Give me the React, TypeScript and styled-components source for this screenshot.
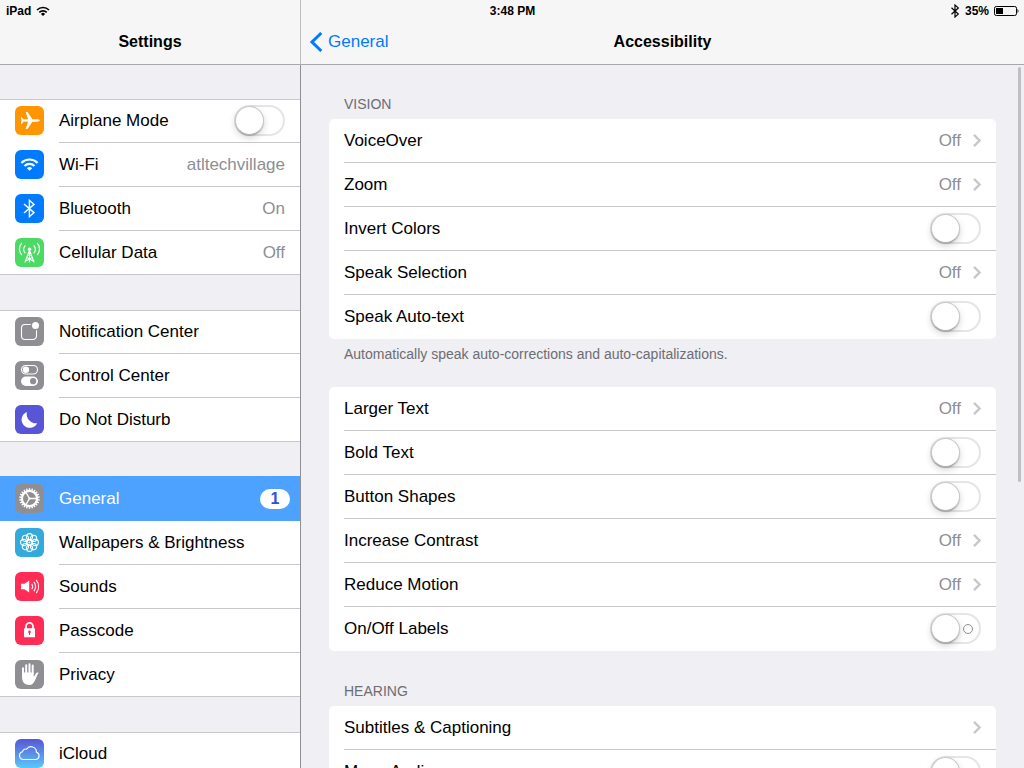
import React from 'react';
import styled, { createGlobalStyle, css } from 'styled-components';

const GlobalStyle = createGlobalStyle`
  *, *::before, *::after { box-sizing: border-box; }
  body {
    margin: 0;
    background: #efeff4;
    color: #000;
    font-family: "Liberation Sans", Arial, sans-serif;
    font-size: 17px;
    line-height: 20px;
  }
  h1, h2, p, ul { margin: 0; padding: 0; }
  ul { list-style: none; }
`;

const Screen = styled.div`
  position: relative;
  display: grid;
  grid-template-columns: 300px minmax(0, 1fr);
  height: 100vh;
  overflow: hidden;
`;

const StatusBar = styled.div`
  position: absolute;
  inset: 0 0 auto 0;
  z-index: 2;
  display: grid;
  grid-template-columns: 1fr auto 1fr;
  align-items: center;
  height: 20px;
  padding: 2px 5px 0 6px;
  font-size: 12px;
  font-weight: bold;
  line-height: 18px;
`;

const StatusGroup = styled.div<{ $end?: boolean }>`
  display: flex;
  align-items: center;
  gap: 5px;
  justify-content: ${(p) => (p.$end ? 'flex-end' : 'flex-start')};
  svg { display: block; }
`;

const Pane = styled.section`
  position: relative;
  display: flex;
  flex-direction: column;
  min-width: 0;
  min-height: 0;
`;

const NavBar = styled.header<{ $divided?: boolean }>`
  flex: none;
  display: grid;
  grid-template-columns: 1fr auto 1fr;
  align-items: center;
  height: 65px;
  padding: 20px 8px 0;
  background: #f6f6f6;
  border-bottom: 1px solid #a7a7ac;
  ${(p) => p.$divided && css`border-left: 1px solid #bfbfc3;`}
`;

const Title = styled.h1`
  grid-column: 2;
  font-size: 16px;
  font-weight: bold;
`;

const BackLink = styled.a`
  display: flex;
  align-items: center;
  gap: 5px;
  color: #007aff;
  text-decoration: none;
`;

const Scroller = styled.div<{ $detail?: boolean }>`
  flex: 1;
  min-height: 0;
  overflow-y: auto;
  scrollbar-width: none;
  ${(p) =>
    p.$detail
      ? css`
          padding: 30px 28px;
          border-left: 1px solid #8e8e93;
        `
      : css`padding: 34px 0;`}
`;

const ScrollThumb = styled.div`
  position: absolute;
  top: 67px;
  right: 3px;
  width: 3px;
  height: 54vh;
  border-radius: 2px;
  background: #bfbfc4;
`;

const SideGroup = styled.ul`
  background: #fff;
  box-shadow: inset 0 1px #c8c7cc, inset 0 -1px #c8c7cc;
  & + & { margin-top: 35px; }
`;

const Line = styled.div`
  flex: 1;
  display: flex;
  align-items: center;
  min-width: 0;
  padding-right: 15px;
  border-bottom: 1px solid #c8c7cc;
`;

const rowStyle = css`
  display: flex;
  height: 44px;
  padding-left: 15px;
  color: inherit;
  text-decoration: none;
`;

const RowLink = styled.a<{ $selected?: boolean }>`
  ${rowStyle}
  ${(p) =>
    p.$selected &&
    css`
      background: #4da1ff;
      box-shadow: 0 -1px #4da1ff;
      color: #fff;
      ${Line} { border-color: transparent; padding-right: 10px; }
    `}
`;

const RowLabel = styled.label`
  ${rowStyle}
`;

const Item = styled.li`
  &:last-child ${Line} { border-color: transparent; }
`;

const IconTile = styled.span<{ $fill: string }>`
  flex: none;
  width: 29px;
  height: 29px;
  margin: 7px 15px 0 0;
  border-radius: 6px;
  background: ${(p) => p.$fill};
  svg { display: block; }
`;

const Name = styled.span`
  flex: 1;
  white-space: nowrap;
`;

const Value = styled.span`
  color: #8e8e93;
`;

const Badge = styled.span`
  width: 30px;
  height: 20px;
  border-radius: 10px;
  background: #fff;
  color: #2a52e0;
  font-size: 16px;
  font-weight: bold;
  text-align: center;
`;

const Switch = styled.input.attrs({ type: 'checkbox', role: 'switch' })<{ $marked?: boolean }>`
  appearance: none;
  position: relative;
  flex: none;
  width: 51px;
  height: 31px;
  margin: 0;
  border: 2px solid #e5e5e5;
  border-radius: 16px;
  background: #fff;
  &::before {
    content: '';
    position: absolute;
    top: -1px;
    left: -1px;
    width: 29px;
    height: 29px;
    border: 1px solid #c9c9c9;
    border-bottom-color: #b0b0b0;
    border-radius: 50%;
    background: #fff;
    box-shadow: 0 3px 7px rgba(0, 0, 0, 0.16), 0 1px 1px rgba(0, 0, 0, 0.2);
  }
  &:checked { background: #4cd964; border-color: #4cd964; }
  &:checked::before { left: 19px; }
  ${(p) =>
    p.$marked &&
    css`
      &::after {
        content: '';
        position: absolute;
        top: 9px;
        right: 6px;
        width: 10px;
        height: 10px;
        border: 1px solid #8e8e8e;
        border-radius: 50%;
      }
    `}
`;

const SectionTitle = styled.h2`
  padding: 0 15px 6px;
  color: #6d6d72;
  font-size: 14px;
  font-weight: normal;
  line-height: 18px;
`;

const Card = styled.ul`
  border-radius: 5px;
  background: #fff;
`;

const Footnote = styled.p`
  padding: 6px 15px 0;
  color: #6d6d72;
  font-size: 14px;
  line-height: 18px;
`;

const Section = styled.section`
  & + & { margin-top: 24px; }
  & + &:has(h2) { margin-top: 31px; }
`;

const ChevronSvg = styled.svg`
  display: block;
  margin-left: 12px;
`;

const Chevron = () => (
  <ChevronSvg width="8" height="13" viewBox="0 0 8 13" fill="none" stroke="#c7c7cc" strokeWidth="2.4" aria-hidden="true">
    <path d="M1 .9 6.6 6.5 1 12.1" />
  </ChevronSvg>
);

const Glyph = ({ children }: { children: React.ReactNode }) => (
  <svg width="29" height="29" viewBox="0 0 29 29" fill="none" stroke="#fff" strokeLinecap="round" strokeLinejoin="round" aria-hidden="true">
    {children}
  </svg>
);

const petals = Array.from({ length: 8 }, (_, i) => (i * Math.PI) / 4);
const teeth = Array.from({ length: 22 }, (_, i) => (i * 360) / 22);

const glyphs = {
  airplane: (
    <path
      fill="#fff"
      stroke="none"
      d="M24.8 14.5c0 .7-1.3 1.2-2.8 1.2h-4.6l-4.9 7.3h-1.9l2.5-7.3-4.6-.3-1.8 2.6H6l.4-3.500L6 11h.7l1.800 2.600 4.600-.300L10.600 6h1.900l4.900 7.300H22c1.500 0 2.800.5 2.800 1.200Z"
    />
  ),
  wifi: (
    <>
      <path strokeWidth="2.2" strokeLinecap="butt" d="M6.4 12.9a11.4 11.4 0 0 1 16.2 0M9.5 16a7 7 0 0 1 10 0" />
      <path fill="#fff" stroke="none" d="M14.5 20.800 11.800 18.200a4 4 0 0 1 5.400 0Z" />
    </>
  ),
  bluetooth: <path strokeWidth="1.4" strokeLinecap="butt" strokeLinejoin="miter" d="m9 10 10 8.6-4.600 4.100V6.300L19 10.400 9 19" />,
  cellular: (
    <>
      <circle cx="14.5" cy="11.3" r="1.7" fill="#fff" stroke="none" />
      <path strokeWidth="1.1" d="M14.5 12v12M14 13.5 10 24M15 13.5 19 24M12.8 17.5h3.400M12 19.500l5.500 3.200M17 19.500l-5.500 3.200" />
      <path strokeWidth="1.2" d="M10 7.800a5.500 5.500 0 0 0 0 7M19 7.800a5.500 5.500 0 0 1 0 7M6.500 5.300a9 9 0 0 0 0 11.400M22.500 5.300a9 9 0 0 1 0 11.400" />
    </>
  ),
  notification: (
    <>
      <path strokeWidth="1.1" strokeLinecap="butt" d="M15.8 7.5H10A3.5 3.5 0 0 0 6.5 11v8a3.5 3.5 0 0 0 3.5 3.5h8a3.5 3.5 0 0 0 3.5-3.5v-5.8" />
      <circle cx="20.5" cy="8.5" r="3.5" fill="#fff" stroke="none" />
    </>
  ),
  control: (
    <>
      <rect x="6.5" y="4.500" width="16" height="8.500" rx="4.250" strokeWidth="1.100" />
      <circle cx="10.900" cy="8.750" r="3.200" fill="#fff" stroke="none" />
      <rect x="6" y="15.500" width="17" height="9.500" rx="4.750" fill="#fff" stroke="none" />
      <circle cx="18.100" cy="20.200" r="3.100" fill="#8e8e93" stroke="none" />
    </>
  ),
  moon: <path fill="#fff" stroke="none" d="M11.900 7a9.300 9.300 0 0 0 10.300 11.200A8.200 8.200 0 1 1 11.900 7Z" />,
  gear: (
    <>
      <circle cx="14.5" cy="14.5" r="7.6" strokeWidth="2.2" />
      {teeth.map((a) => (
        <path key={a} d="M14.5 6.5V4.2" strokeWidth="1.4" strokeLinecap="butt" transform={`rotate(${a} 14.5 14.5)`} />
      ))}
      <path strokeWidth="1.3" d="M15 14.5H22M14.2 14 10.7 8M14.2 15 10.7 21" />
      <circle cx="14.5" cy="14.5" r="1.1" fill="#fff" stroke="none" />
    </>
  ),
  flower: (
    <>
      {petals.map((a) => (
        <circle key={a} cx={14.5 + 5.8 * Math.cos(a)} cy={14.5 + 5.8 * Math.sin(a)} r="3.1" strokeWidth="1.1" />
      ))}
      <circle cx="14.5" cy="14.5" r="2.6" strokeWidth="1.1" />
      <circle cx="14.5" cy="14.5" r="1" fill="#fff" stroke="none" />
    </>
  ),
  speaker: (
    <>
      <path fill="#fff" stroke="none" d="M6 11.8h3.5l4.700-3.300v12l-4.700-3.300H6Z" />
      <path strokeWidth="1.2" d="M17 12.200a5 5 0 0 1 0 4.600M19.200 10.200a8 8 0 0 1 0 8.600M21.500 8.300a10.500 10.500 0 0 1 0 12.400" />
    </>
  ),
  lock: (
    <>
      <path strokeWidth="1.7" strokeLinecap="butt" d="M11 13v-2.7a3.5 3.5 0 0 1 7 0V13" />
      <rect x="9" y="12.3" width="11" height="9" rx=".6" fill="#fff" stroke="none" />
      <circle cx="14.5" cy="15.9" r="1.3" fill="#ff2d55" stroke="none" />
      <path stroke="#ff2d55" strokeWidth="1" strokeLinecap="butt" d="M14.5 16v3" />
    </>
  ),
  hand: (
    <>
      <path strokeWidth="2" d="M8 13V8.3M11.2 13V5.2M14.5 13V4.3M17.7 13V5.5" />
      <path fill="#fff" stroke="none" d="M7 12.5h11.7v4.3c1-.7 1.500-2.300 2.300-3.500.7-1 2-1.100 2.700-.6-1.400 1.700-2.300 4.600-3.500 7.300-1.300 3-3 5-6 5-4.400 0-7.200-3-7.200-8Z" />
    </>
  ),
  cloud: <path strokeWidth="1.1" d="M8.300 20.500a3.900 3.900 0 0 1-.7-7.700 2.900 2.900 0 0 1 4-2.600 5.300 5.300 0 0 1 9.800 3.100 3.700 3.700 0 0 1-.4 7.200Z" />,
};

type SideRow = {
  name: string;
  icon: keyof typeof glyphs;
  fill: string;
  value?: string;
  toggle?: boolean;
  badge?: string;
  selected?: boolean;
};

const sideGroups: SideRow[][] = [
  [
    { name: 'Airplane Mode', icon: 'airplane', fill: '#ff9500', toggle: true },
    { name: 'Wi-Fi', icon: 'wifi', fill: '#007aff', value: 'atltechvillage' },
    { name: 'Bluetooth', icon: 'bluetooth', fill: '#007aff', value: 'On' },
    { name: 'Cellular Data', icon: 'cellular', fill: '#4cd964', value: 'Off' },
  ],
  [
    { name: 'Notification Center', icon: 'notification', fill: '#8e8e93' },
    { name: 'Control Center', icon: 'control', fill: '#8e8e93' },
    { name: 'Do Not Disturb', icon: 'moon', fill: '#5856d6' },
  ],
  [
    { name: 'General', icon: 'gear', fill: '#8e8e93', badge: '1', selected: true },
    { name: 'Wallpapers & Brightness', icon: 'flower', fill: '#34aadc' },
    { name: 'Sounds', icon: 'speaker', fill: '#ff2d55' },
    { name: 'Passcode', icon: 'lock', fill: '#ff2d55' },
    { name: 'Privacy', icon: 'hand', fill: '#8e8e93' },
  ],
  [{ name: 'iCloud', icon: 'cloud', fill: 'linear-gradient(#5856d6, #5ac8fa)' }],
];

type DetailRow = { name: string; value?: string; toggle?: boolean; marked?: boolean };
type DetailSection = { title?: string; note?: string; rows: DetailRow[] };

const sections: DetailSection[] = [
  {
    title: 'VISION',
    note: 'Automatically speak auto-corrections and auto-capitalizations.',
    rows: [
      { name: 'VoiceOver', value: 'Off' },
      { name: 'Zoom', value: 'Off' },
      { name: 'Invert Colors', toggle: true },
      { name: 'Speak Selection', value: 'Off' },
      { name: 'Speak Auto-text', toggle: true },
    ],
  },
  {
    rows: [
      { name: 'Larger Text', value: 'Off' },
      { name: 'Bold Text', toggle: true },
      { name: 'Button Shapes', toggle: true },
      { name: 'Increase Contrast', value: 'Off' },
      { name: 'Reduce Motion', value: 'Off' },
      { name: 'On/Off Labels', toggle: true, marked: true },
    ],
  },
  {
    title: 'HEARING',
    rows: [{ name: 'Subtitles & Captioning' }, { name: 'Mono Audio', toggle: true }],
  },
];

const SideItem = ({ row }: { row: SideRow }) => {
  const content = (
    <>
      <IconTile $fill={row.fill}>
        <Glyph>{glyphs[row.icon]}</Glyph>
      </IconTile>
      <Line>
        <Name>{row.name}</Name>
        {row.value && <Value>{row.value}</Value>}
        {row.badge && <Badge>{row.badge}</Badge>}
        {row.toggle && <Switch />}
      </Line>
    </>
  );
  return (
    <Item>
      {row.toggle ? (
        <RowLabel>{content}</RowLabel>
      ) : (
        <RowLink href="#" $selected={row.selected} aria-current={row.selected ? 'page' : undefined}>
          {content}
        </RowLink>
      )}
    </Item>
  );
};

const DetailItem = ({ row }: { row: DetailRow }) => (
  <Item>
    {row.toggle ? (
      <RowLabel>
        <Line>
          <Name>{row.name}</Name>
          <Switch $marked={row.marked} />
        </Line>
      </RowLabel>
    ) : (
      <RowLink href="#">
        <Line>
          <Name>{row.name}</Name>
          {row.value && <Value>{row.value}</Value>}
          <Chevron />
        </Line>
      </RowLink>
    )}
  </Item>
);

export default function App() {
  return (
    <>
      <GlobalStyle />
      <Screen>
        <StatusBar>
          <StatusGroup>
            <span>iPad</span>
            <svg width="14" height="11" viewBox="0 0 14 11" fill="none" stroke="#000" strokeWidth="1.6" aria-label="Wi-Fi">
              <path d="M1 4a8.6 8.6 0 0 1 12 0M3.3 6.4a5.3 5.3 0 0 1 7.4 0" />
              <path fill="#000" stroke="none" d="M7 10 4.9 7.900a3 3 0 0 1 4.200 0Z" />
            </svg>
          </StatusGroup>
          <span>3:48 PM</span>
          <StatusGroup $end>
            <svg width="10" height="14" viewBox="0 0 10 14" fill="none" stroke="#000" strokeWidth="1.2" aria-label="Bluetooth">
              <path d="m1.5 3.8 6.8 6.3L5 13V1l3.300 2.900-6.800 6.300" />
            </svg>
            <span>35%</span>
            <svg width="25" height="10" viewBox="0 0 25 10" aria-label="Battery">
              <rect x=".5" y=".5" width="22" height="9" rx="1.8" fill="none" stroke="#000" />
              <rect x="2" y="2" width="7" height="6" fill="#000" />
              <path d="M23.5 3c1.300.5 1.300 3.500 0 4Z" fill="#000" />
            </svg>
          </StatusGroup>
        </StatusBar>

        <Pane as="nav">
          <NavBar>
            <Title>Settings</Title>
          </NavBar>
          <Scroller>
            {sideGroups.map((group) => (
              <SideGroup key={group[0].name}>
                {group.map((row) => (
                  <SideItem key={row.name} row={row} />
                ))}
              </SideGroup>
            ))}
          </Scroller>
        </Pane>

        <Pane as="main">
          <NavBar $divided>
            <BackLink href="#">
              <svg width="14" height="20" viewBox="0 0 14 20" fill="none" stroke="#007aff" strokeWidth="3" aria-hidden="true">
                <path d="M12.3 1 3 10l9.300 9" />
              </svg>
              General
            </BackLink>
            <Title>Accessibility</Title>
          </NavBar>
          <Scroller $detail>
            {sections.map((section) => (
              <Section key={section.rows[0].name}>
                {section.title && <SectionTitle>{section.title}</SectionTitle>}
                <Card>
                  {section.rows.map((row) => (
                    <DetailItem key={row.name} row={row} />
                  ))}
                </Card>
                {section.note && <Footnote>{section.note}</Footnote>}
              </Section>
            ))}
          </Scroller>
          <ScrollThumb />
        </Pane>
      </Screen>
    </>
  );
}
